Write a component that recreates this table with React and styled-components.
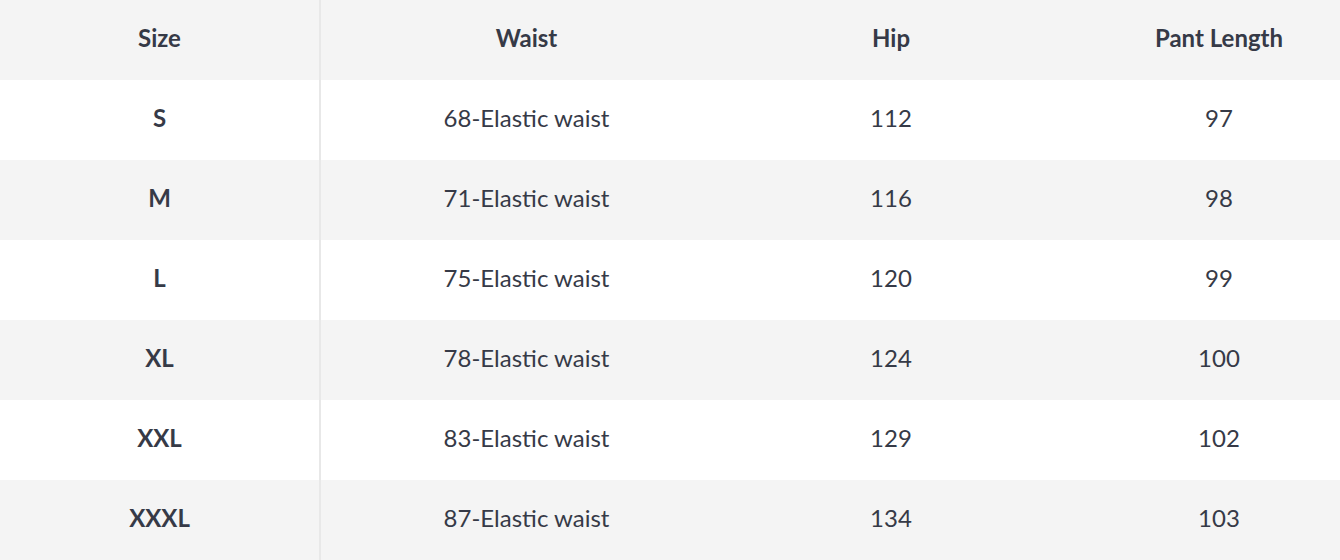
import React from "react";
import styled, { createGlobalStyle } from "styled-components";

const sizes = [
	{ size: "S", waist: "68-Elastic waist", hip: 112, length: 97 },
	{ size: "M", waist: "71-Elastic waist", hip: 116, length: 98 },
	{ size: "L", waist: "75-Elastic waist", hip: 120, length: 99 },
	{ size: "XL", waist: "78-Elastic waist", hip: 124, length: 100 },
	{ size: "XXL", waist: "83-Elastic waist", hip: 129, length: 102 },
	{ size: "XXXL", waist: "87-Elastic waist", hip: 134, length: 103 },
];

const App = () => {
	return (
		<>
			<GlobalStyle />
			<Wrapper>
				<Table>
					<colgroup>
						<col style={{ width: 320 }} />
						<col style={{ width: 412 }} />
						<col style={{ width: 318 }} />
						<col style={{ width: 338 }} />
					</colgroup>
					<thead>
						<Row $shaded>
							<HeadCell $first>Size</HeadCell>
							<HeadCell>Waist</HeadCell>
							<HeadCell>Hip</HeadCell>
							<HeadCell>Pant Length</HeadCell>
						</Row>
					</thead>
					<tbody>
						{sizes.map((item, i) => (
							<Row key={item.size} $shaded={i % 2 === 1}>
								<SizeCell>{item.size}</SizeCell>
								<Cell>{item.waist}</Cell>
								<Cell>{item.hip}</Cell>
								<Cell>{item.length}</Cell>
							</Row>
						))}
					</tbody>
				</Table>
			</Wrapper>
		</>
	);
};

export default App;

const GlobalStyle = createGlobalStyle`
	body {
		margin: 0;
		background: #ffffff;
		font-family: Lato, "Open Sans", sans-serif;
		overflow: hidden;
	}
`;

const Wrapper = styled.div`
	width: 1340px;
	height: 560px;
	overflow: hidden;
`;

const Table = styled.table`
	width: 1388px;
	table-layout: fixed;
	border-collapse: collapse;
	color: #363a47;
	font-size: 24px;
	line-height: 30px;
`;

const Row = styled.tr`
	height: 80px;
	background: ${(p) => (p.$shaded ? "#f4f4f4" : "#ffffff")};
`;

const Cell = styled.td`
	padding: 0 0 4px;
	text-align: center;
	vertical-align: middle;
	font-weight: 400;
`;

const SizeCell = styled(Cell)`
	font-weight: 700;
	border-right: 2px solid #e8e8e8;
`;

const HeadCell = styled.th`
	padding: 0 0 4px;
	text-align: center;
	vertical-align: middle;
	font-weight: 700;
	border-right: ${(p) => (p.$first ? "2px solid #e8e8e8" : "none")};
`;
